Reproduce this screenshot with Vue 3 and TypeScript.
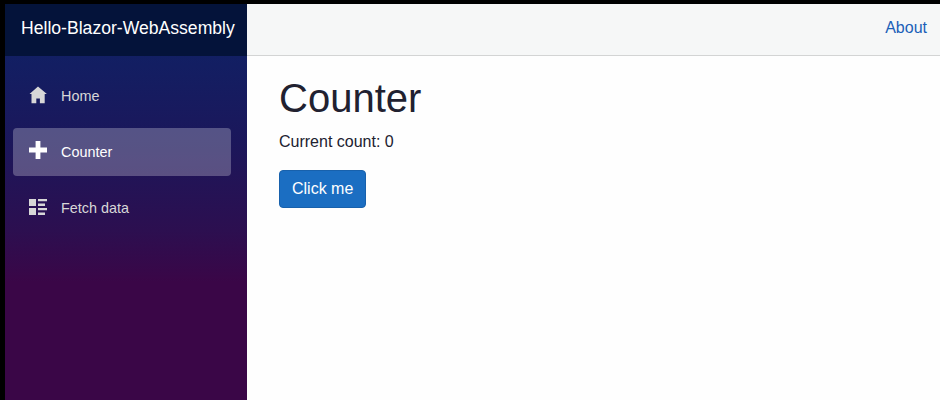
<script setup lang="ts">
import { ref } from 'vue'

interface NavItem {
  label: string
  icon: string
}

const navItems: NavItem[] = [
  { label: 'Home', icon: 'M9 1.6L0.5 9h2v9.2h4.8v-4.7h3.6v4.7h4.8v-9.2h2.2z' },
  { label: 'Counter', icon: 'M6.6 0v6.6h-6.6v4.8h6.6v6.6h4.8v-6.6h6.6v-4.8h-6.6v-6.6z' },
  {
    label: 'Fetch data',
    icon: 'M0 2h7v7h-7zM9 2h9v2.3h-9zM9 6.6h7v2.4h-7zM0 11h7v7h-7zM9 11h9v2.3h-9zM9 15.6h7v2.4h-7z',
  },
]

const active = ref('Counter')
const count = ref(0)
</script>

<template>
  <div class="page">
    <aside class="sidebar">
      <div class="brand">Hello-Blazor-WebAssembly</div>
      <nav class="nav">
        <a
          v-for="item in navItems"
          :key="item.label"
          class="nav-link"
          :class="{ active: item.label === active }"
          @click="active = item.label"
        >
          <svg class="icon" viewBox="0 0 18 18"><path :d="item.icon" /></svg>
          <span>{{ item.label }}</span>
        </a>
      </nav>
    </aside>
    <main class="main">
      <header class="top-row"><a class="about">About</a></header>
      <section class="content">
        <h1>Counter</h1>
        <p>Current count: {{ count }}</p>
        <button class="btn" type="button" @click="count++">Click me</button>
      </section>
    </main>
  </div>
</template>

<style>
body {
  margin: 0;
  background: #000;
}
</style>

<style scoped>
.page {
  display: flex;
  box-sizing: border-box;
  width: 100%;
  height: 400px;
  padding: 4px 0 0 5px;
  overflow: hidden;
  background: #000;
  font-family: 'Liberation Sans', Arial, sans-serif;
  font-size: 16px;
  line-height: 24px;
  color: #212130;
}

.sidebar {
  flex: none;
  width: 242px;
  background: linear-gradient(180deg, #0c2268 0, #121f63 52px, #1b175b 136px, #2c0f50 226px, #3a0647 278px);
}

.brand {
  box-sizing: border-box;
  height: 52px;
  padding: 11px 0 0 16px;
  background: #04133a;
  color: #fff;
  font-size: 17.6px;
  line-height: 27px;
  white-space: nowrap;
}

.nav {
  display: flex;
  flex-direction: column;
  gap: 8px;
  padding: 16px 16px 0 8px;
}

.nav-link {
  display: flex;
  align-items: center;
  height: 48px;
  border-radius: 4px;
  color: #d7d7d7;
  font-size: 14.4px;
  cursor: pointer;
}

.nav-link.active {
  background: rgba(255, 255, 255, 0.26);
  color: #fff;
}

.icon {
  width: 18px;
  height: 18px;
  margin: -4px 14px 0 16px;
  overflow: visible;
  fill: currentColor;
}

.main {
  flex: 1;
  background: #fefefe;
}

.top-row {
  display: flex;
  justify-content: flex-end;
  box-sizing: border-box;
  height: 52px;
  padding: 12px 13px 0 0;
  border-bottom: 1px solid #d3d4d4;
  background: #f6f7f7;
}

.about {
  color: #1b5fb8;
}

.content {
  padding: 18px 32px 0;
}

h1 {
  margin: 0 0 8px;
  font-size: 40px;
  font-weight: 400;
  line-height: 48px;
}

p {
  margin: 0 0 16px;
}

.btn {
  box-sizing: border-box;
  height: 38px;
  padding: 6px 12px;
  border: 1px solid #1861ac;
  border-radius: 4px;
  background: #1b6ec2;
  color: #fff;
  font: inherit;
}
</style>
